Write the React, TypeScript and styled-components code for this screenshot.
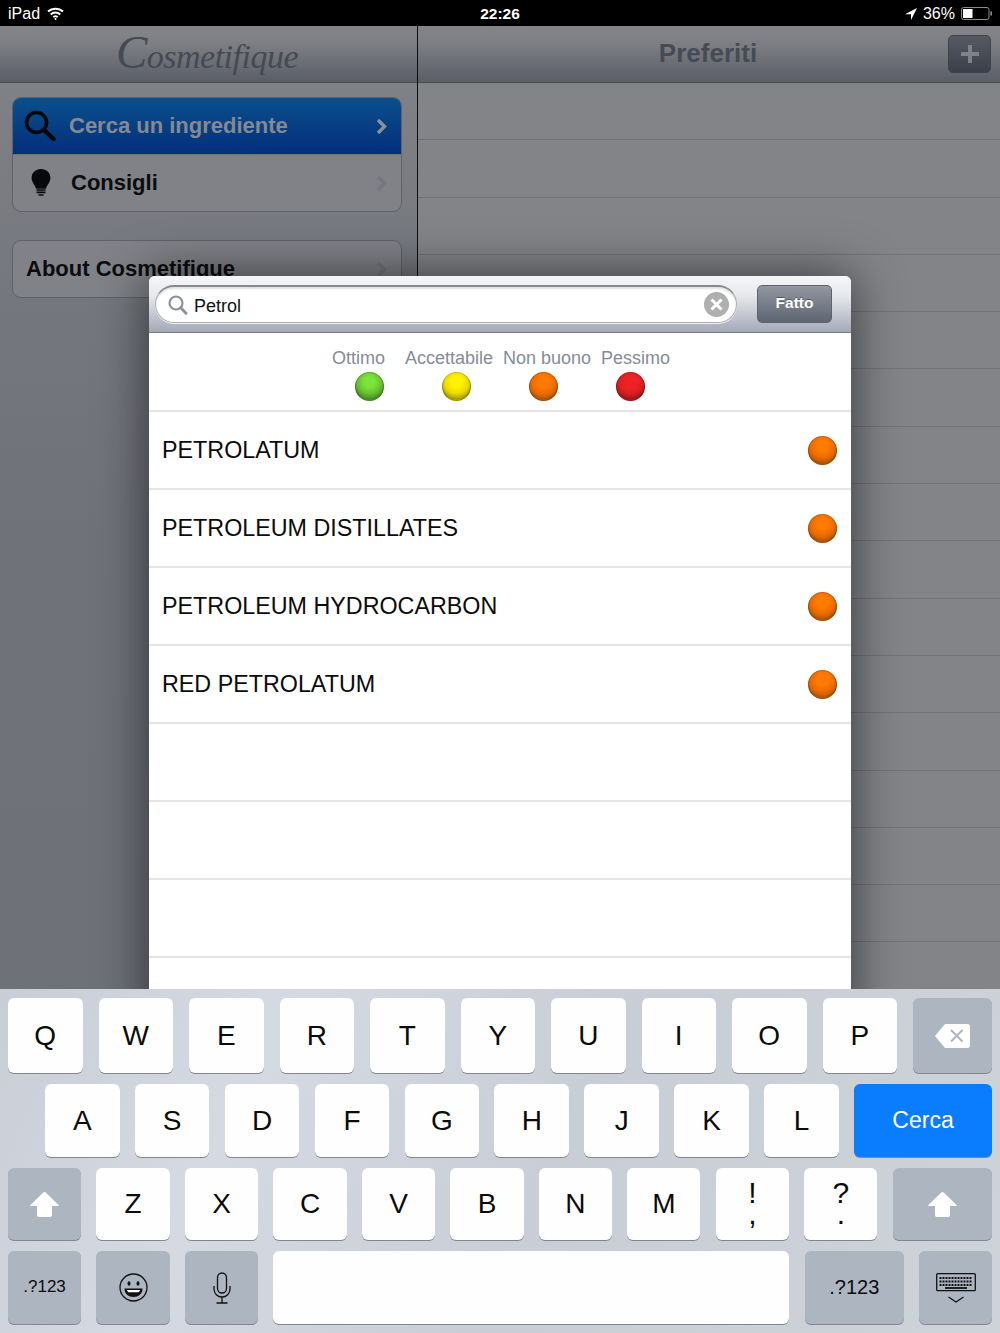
import React from "react";
import styled, { createGlobalStyle } from "styled-components";

const Global = createGlobalStyle`
  html, body { margin: 0; padding: 0; background: #000; }
  * { box-sizing: border-box; }
  body { font-family: "Liberation Sans", Arial, sans-serif; }
`;

const Page = styled.div`
  width: 1000px;
  height: 1333px;
  display: flex;
  flex-direction: column;
  overflow: hidden;
`;

const StatusBar = styled.div`
  height: 26px;
  flex: none;
  background: #000;
  color: #fff;
  display: grid;
  grid-template-columns: 1fr auto 1fr;
  align-items: center;
  padding: 1px 8px 0;
  font-size: 16px;
`;
const StatusSide = styled.div<{ $end?: boolean }>`
  display: flex;
  align-items: center;
  gap: ${(p) => (p.$end ? 6 : 7)}px;
  justify-content: ${(p) => (p.$end ? "flex-end" : "flex-start")};
`;
const Clock = styled.div`
  font-size: 15.5px;
  font-weight: 700;
`;

const Main = styled.div`
  position: relative;
  flex: 1;
  min-height: 0;
  display: flex;
  overflow: hidden;
`;

const Master = styled.section`
  width: 417px;
  flex: none;
  background: linear-gradient(180deg, #808186 57px, #74777d 270px, #6f7279 500px, #6e7178 100%);
`;
const Detail = styled.section`
  flex: 1;
  border-left: 1px solid #0c0d10;
  background: #838488;
`;

const NavBar = styled.header`
  height: 57px;
  position: relative;
  display: flex;
  align-items: center;
  justify-content: center;
  background: linear-gradient(180deg, #85868a 0%, #7b7d82 35%, #5c5f68 97%);
  border-bottom: 1px solid #484b52;
`;
const Logo = styled.div`
  font-family: "Liberation Serif", serif;
  font-style: italic;
  font-size: 34px;
  letter-spacing: -0.5px;
  color: #454a52;
  margin-left: -3px;
  margin-top: -5px;
  &::first-letter {
    font-size: 47px;
  }
`;
const NavTitle = styled.h1`
  margin: -1px 0 0 -2px;
  font-size: 26px;
  font-weight: 700;
  color: #464b53;
`;
const PlusButton = styled.div`
  position: absolute;
  right: 9px;
  top: 9px;
  width: 43px;
  height: 38px;
  border-radius: 5px;
  display: flex;
  align-items: center;
  justify-content: center;
  border: 1px solid #3f424a;
  background: linear-gradient(180deg, #555962, #3c404a);
`;

const MenuList = styled.div`
  padding: 14px 15px 0 12px;
  display: flex;
  flex-direction: column;
  gap: 28px;
`;
const Group = styled.div`
  border: 1px solid #5f6268;
  border-radius: 9px;
  overflow: hidden;
  background: #808287;
`;
const MenuRow = styled.div<{ $active?: boolean }>`
  height: ${(p) => (p.$active ? 57 : 56)}px;
  display: flex;
  align-items: center;
  padding: 0 14px 0 11px;
  gap: 13px;
  font-size: 22px;
  font-weight: 700;
  color: ${(p) => (p.$active ? "#858990" : "#0b0c0e")};
  background: ${(p) => (p.$active ? "linear-gradient(180deg, #0a4f8c, #032f7b)" : "transparent")};
  border-bottom: ${(p) => (p.$active ? "1px solid #6e7177" : "none")};
`;
const MenuIcon = styled.span<{ $inset?: number }>`
  display: flex;
  margin-left: ${(p) => p.$inset ?? 0}px;
`;
const MenuLabel = styled.span<{ $inset?: number }>`
  flex: 1;
  padding-left: ${(p) => p.$inset ?? 0}px;
`;

const TableRow = styled.div`
  height: 57.3px;
  border-bottom: 1px solid #707276;
`;

const Modal = styled.div`
  position: absolute;
  left: 149px;
  top: 250px;
  width: 702px;
  height: 760px;
  background: #fff;
  border-radius: 6px 6px 0 0;
  box-shadow: 0 0 50px rgba(0, 0, 0, 0.6);
  overflow: hidden;
`;
const ModalHeader = styled.div`
  height: 57px;
  display: flex;
  align-items: flex-start;
  gap: 20px;
  padding: 9px 19px 0 6px;
  background: linear-gradient(180deg, #f5f6f8 0%, #e6e8ec 35%, #a4a9b7 100%);
  border-bottom: 1px solid #767a85;
`;
const SearchField = styled.div`
  flex: 1;
  height: 38px;
  border-radius: 19px;
  background: #fff;
  border: 1px solid #a9acb3;
  border-top: 2px solid #85888f;
  box-shadow: 0 1px 0 #eef0f3, inset 0 2px 2px rgba(0, 0, 0, 0.12);
  display: flex;
  align-items: center;
  padding: 0 7px 0 12px;
  gap: 6px;
  font-size: 18px;
  color: #111;
`;
const SearchText = styled.span`
  flex: 1;
  padding-top: 4px;
`;
const DoneButton = styled.div`
  width: 75px;
  height: 38px;
  border-radius: 5px;
  border: 1px solid #5f636d;
  background: linear-gradient(180deg, #9297a0, #5e6572);
  color: #fff;
  font-size: 15.5px;
  font-weight: 700;
  display: flex;
  align-items: center;
  justify-content: center;
  padding-bottom: 3px;
  text-shadow: 0 -1px 0 rgba(0, 0, 0, 0.35);
`;

const Legend = styled.div`
  height: 79px;
  border-bottom: 2px solid #e4e4e6;
  padding-top: 15px;
`;
const LegendLabels = styled.div`
  display: flex;
  justify-content: center;
  padding-left: 2px;
  font-size: 18px;
  line-height: 21px;
  color: #868c98;
`;
const LegendLabel = styled.span<{ $gap: number }>`
  margin-left: ${(p) => p.$gap}px;
`;
const LegendDots = styled.div`
  display: flex;
  justify-content: center;
  gap: 58px;
  margin-top: 3px;
`;

const Dot = styled.span<{ $c: [string, string, string] }>`
  width: 29px;
  height: 29px;
  flex: none;
  border-radius: 50%;
  background: radial-gradient(
    circle at 50% 34%,
    ${(p) => p.$c[0]} 0%,
    ${(p) => p.$c[0]} 22%,
    ${(p) => p.$c[1]} 48%,
    ${(p) => p.$c[2]} 70%,
    ${(p) => p.$c[1]} 80%,
    ${(p) => p.$c[2]} 100%
  );
  box-shadow: inset 0 0 0 1px rgba(0, 0, 0, 0.16), inset 0 -2px 2px rgba(0, 0, 0, 0.14);
`;

const ResultRow = styled.div`
  height: 78px;
  border-bottom: 2px solid #e4e4e6;
  display: flex;
  align-items: center;
  justify-content: space-between;
  padding: 0 14px 0 13px;
  font-size: 23.3px;
  color: #0c0c0c;
`;

const Keyboard = styled.div`
  height: 344px;
  flex: none;
  padding: 9px 8px;
  display: flex;
  flex-direction: column;
  gap: 11px;
  background: linear-gradient(115deg, #c9ced6 0%, #d5d9e1 25%, #c9ced6 55%, #ced2d9 100%);
`;
const KeyRow = styled.div<{ $gap: number; $left?: number; $h: number }>`
  display: flex;
  height: ${(p) => p.$h}px;
  gap: ${(p) => p.$gap}px;
  padding-left: ${(p) => p.$left ?? 0}px;
`;
const Key = styled.div<{ $w: number; $tone?: "dark" | "blue"; $size?: number }>`
  width: ${(p) => p.$w}px;
  flex: none;
  border-radius: 6px;
  display: flex;
  flex-direction: column;
  align-items: center;
  justify-content: center;
  font-size: ${(p) => p.$size ?? 28}px;
  line-height: 1;
  color: ${(p) => (p.$tone === "blue" ? "#fff" : "#0b0b0b")};
  background: ${(p) => (p.$tone === "blue" ? "#0a7dfe" : p.$tone === "dark" ? "#adb5c1" : "#fefefe")};
  box-shadow: 0 1px 0 #83868c;
`;
const LabelKey = styled(Key)`
  padding-bottom: 2px;
`;
const StackGlyph = styled.span`
  display: block;
  text-align: center;
  line-height: 21px;
  font-size: 30px;
  padding-bottom: 3px;
`;

const ORANGE: [string, string, string] = ["#ff7a00", "#ee6c00", "#b95a04"];
const GREEN: [string, string, string] = ["#7de23c", "#68c232", "#4b9428"];
const YELLOW: [string, string, string] = ["#fff200", "#ecdc00", "#b0a400"];
const RED: [string, string, string] = ["#ee2224", "#dc1f22", "#a81a1c"];

const Chevron = ({ color }: { color: string }) => (
  <svg width="11" height="17" viewBox="0 0 11 17">
    <path d="M2 2l6.5 6.5L2 15" fill="none" stroke={color} strokeWidth="3.4" />
  </svg>
);

const Wifi = () => (
  <svg width="17" height="13" viewBox="0 0 17 13" fill="none" stroke="#fff" strokeWidth="2">
    <path d="M1 4.6C5.2.8 11.8.8 16 4.6" />
    <path d="M3.7 7.4c2.8-2.4 6.8-2.4 9.6 0" />
    <path d="M6.3 10c1.3-1 3.1-1 4.4 0" />
    <circle cx="8.5" cy="12" r="1" fill="#fff" stroke="none" />
  </svg>
);

const LocationArrow = () => (
  <svg width="12" height="12" viewBox="0 0 12 12">
    <path d="M12 0L0 6.2h6V12z" fill="#fff" />
  </svg>
);

const Battery = () => (
  <svg width="31" height="13" viewBox="0 0 31 13">
    <rect x="0.5" y="0.5" width="27.5" height="12" rx="2" fill="none" stroke="#8d8d8d" />
    <rect x="2" y="2" width="9.5" height="9" fill="#fff" />
    <rect x="29.4" y="4.5" width="1.6" height="4" fill="#8d8d8d" />
  </svg>
);

const Plus = () => (
  <svg width="18" height="18" viewBox="0 0 18 18">
    <path d="M7 0h4v7h7v4h-7v7H7v-7H0V7h7z" fill="#7f8289" />
  </svg>
);

const SearchBig = () => (
  <svg width="32" height="32" viewBox="0 0 32 32" fill="none" stroke="#05060a">
    <circle cx="12.5" cy="12.5" r="10" strokeWidth="3.6" />
    <path d="M20 20l9.5 9" strokeWidth="4.4" strokeLinecap="round" />
  </svg>
);

const Bulb = () => (
  <svg width="20" height="28" viewBox="0 0 20 28">
    <path d="M10 0c5.4 0 9.4 3.8 9.4 8.8 0 4.8-3.4 7-4.4 11H5C4 15.8.6 13.6.6 8.8.6 3.8 4.6 0 10 0z" fill="#07080b" />
    <path d="M5.5 21h9M5.5 23.4h9M7.5 26h5" stroke="#07080b" strokeWidth="1.6" />
  </svg>
);

const SearchSmall = () => (
  <svg width="20" height="20" viewBox="0 0 20 20" fill="none" stroke="#8d929a">
    <circle cx="8" cy="8" r="6.5" strokeWidth="2.2" />
    <path d="M12.8 12.8l5.2 5.4" strokeWidth="3" strokeLinecap="round" />
  </svg>
);

const ClearIcon = () => (
  <svg width="25" height="25" viewBox="0 0 25 25">
    <circle cx="12.5" cy="12.5" r="12.5" fill="#afafaf" />
    <path d="M7.5 7.5l10 10M17.5 7.5l-10 10" stroke="#fff" strokeWidth="3" />
  </svg>
);

const Shift = () => (
  <svg width="29" height="25" viewBox="0 0 29 25">
    <path
      d="M13.3.6a1.7 1.7 0 0 1 2.4 0L28.6 13a.6.6 0 0 1-.4 1H22v9a2 2 0 0 1-2 2H9a2 2 0 0 1-2-2v-9H.8a.6.6 0 0 1-.4-1z"
      fill="#fff"
    />
  </svg>
);

const Backspace = () => (
  <svg width="35" height="24" viewBox="0 0 35 24">
    <path d="M10 0h22a3 3 0 0 1 3 3v18a3 3 0 0 1-3 3H10L0 12z" fill="#fff" />
    <path d="M16 6l11.5 11.5M27.5 6L16 17.5" stroke="#adb5c1" strokeWidth="2" />
  </svg>
);

const Emoji = () => (
  <svg width="29" height="29" viewBox="0 0 29 29" fill="none" stroke="#111">
    <circle cx="14.5" cy="14.5" r="13.5" strokeWidth="1.3" />
    <ellipse cx="10" cy="10.5" rx="1.5" ry="2.3" fill="#111" stroke="none" />
    <ellipse cx="19" cy="10.5" rx="1.5" ry="2.3" fill="#111" stroke="none" />
    <path d="M5.5 15.5h18c0 5.5-4 8.5-9 8.5s-9-3-9-8.5z" fill="#111" stroke="none" />
    <path d="M8 17h13c-.5 1.5-1 2-1.5 2.2h-10C9 19 8.5 18.5 8 17z" fill="#fff" stroke="none" />
  </svg>
);

const Mic = () => (
  <svg width="18" height="32" viewBox="0 0 18 32" fill="none" stroke="#111" strokeWidth="1.3">
    <rect x="4.5" y="1" width="9" height="20" rx="4.5" />
    <path d="M1 14v3c0 4.5 3.5 8 8 8s8-3.5 8-8v-3M9 25v6M3.5 31h11" />
  </svg>
);

const KeyboardIcon = () => (
  <svg width="40" height="30" viewBox="0 0 40 30">
    <rect x="0.7" y="0.7" width="38.6" height="17" rx="1" fill="none" stroke="#111" strokeWidth="1.3" />
    <path d="M3.5 5h33M3.5 8.5h33M3.5 12h33" stroke="#111" strokeWidth="2" strokeDasharray="2 1" />
    <path d="M9 15h22" stroke="#111" strokeWidth="1.8" />
    <path d="M12.5 24l7.5 5 7.5-5" fill="none" stroke="#111" strokeWidth="1.2" />
  </svg>
);

const tableRows = Array.from({ length: 15 }, (_, i) => i);
const results = ["PETROLATUM", "PETROLEUM DISTILLATES", "PETROLEUM HYDROCARBON", "RED PETROLATUM"];
const emptyRows = [0, 1, 2];
const row1 = ["Q", "W", "E", "R", "T", "Y", "U", "I", "O", "P"];
const row2 = ["A", "S", "D", "F", "G", "H", "J", "K", "L"];
const row3 = ["Z", "X", "C", "V", "B", "N", "M"];

export default function App() {
  return (
    <Page>
      <Global />
      <StatusBar>
        <StatusSide>
          iPad
          <Wifi />
        </StatusSide>
        <Clock>22:26</Clock>
        <StatusSide $end>
          <LocationArrow />
          36%
          <Battery />
        </StatusSide>
      </StatusBar>

      <Main>
        <Master>
          <NavBar>
            <Logo>Cosmetifique</Logo>
          </NavBar>
          <MenuList>
            <Group>
              <MenuRow $active>
                <MenuIcon>
                  <SearchBig />
                </MenuIcon>
                <MenuLabel>Cerca un ingrediente</MenuLabel>
                <Chevron color="#8c9097" />
              </MenuRow>
              <MenuRow>
                <MenuIcon $inset={7}>
                  <Bulb />
                </MenuIcon>
                <MenuLabel $inset={7}>Consigli</MenuLabel>
                <Chevron color="#74777d" />
              </MenuRow>
            </Group>
            <Group>
              <MenuRow>
                <MenuLabel $inset={2}>About Cosmetifique</MenuLabel>
                <Chevron color="#74777d" />
              </MenuRow>
            </Group>
          </MenuList>
        </Master>

        <Detail>
          <NavBar>
            <NavTitle>Preferiti</NavTitle>
            <PlusButton>
              <Plus />
            </PlusButton>
          </NavBar>
          {tableRows.map((i) => (
            <TableRow key={i} />
          ))}
        </Detail>

        <Modal>
          <ModalHeader>
            <SearchField>
              <SearchSmall />
              <SearchText>Petrol</SearchText>
              <ClearIcon />
            </SearchField>
            <DoneButton>Fatto</DoneButton>
          </ModalHeader>
          <Legend>
            <LegendLabels>
              <LegendLabel $gap={0}>Ottimo</LegendLabel>
              <LegendLabel $gap={20}>Accettabile</LegendLabel>
              <LegendLabel $gap={10}>Non buono</LegendLabel>
              <LegendLabel $gap={10}>Pessimo</LegendLabel>
            </LegendLabels>
            <LegendDots>
              <Dot $c={GREEN} />
              <Dot $c={YELLOW} />
              <Dot $c={ORANGE} />
              <Dot $c={RED} />
            </LegendDots>
          </Legend>
          {results.map((r) => (
            <ResultRow key={r}>
              {r}
              <Dot $c={ORANGE} />
            </ResultRow>
          ))}
          {emptyRows.map((i) => (
            <ResultRow key={i} />
          ))}
        </Modal>
      </Main>

      <Keyboard>
        <KeyRow $gap={16} $h={75}>
          {row1.map((k) => (
            <Key key={k} $w={74.5}>
              {k}
            </Key>
          ))}
          <Key $w={79} $tone="dark">
            <Backspace />
          </Key>
        </KeyRow>
        <KeyRow $gap={15.3} $left={37} $h={73}>
          {row2.map((k) => (
            <Key key={k} $w={74.6}>
              {k}
            </Key>
          ))}
          <Key $w={138} $tone="blue" $size={23}>
            Cerca
          </Key>
        </KeyRow>
        <KeyRow $gap={15.4} $h={72}>
          <Key $w={73.1} $tone="dark">
            <Shift />
          </Key>
          {row3.map((k) => (
            <Key key={k} $w={73.1}>
              {k}
            </Key>
          ))}
          <Key $w={73.1}>
            <StackGlyph>
              !<br />,
            </StackGlyph>
          </Key>
          <Key $w={73.1}>
            <StackGlyph>
              ?<br />.
            </StackGlyph>
          </Key>
          <Key $w={99} $tone="dark">
            <Shift />
          </Key>
        </KeyRow>
        <KeyRow $gap={15.4} $h={73}>
          <LabelKey $w={73.1} $tone="dark" $size={17}>
            .?123
          </LabelKey>
          <Key $w={73.1} $tone="dark">
            <Emoji />
          </Key>
          <Key $w={73.1} $tone="dark">
            <Mic />
          </Key>
          <Key $w={516} />
          <LabelKey $w={99} $tone="dark" $size={20}>
            .?123
          </LabelKey>
          <Key $w={73.1} $tone="dark">
            <KeyboardIcon />
          </Key>
        </KeyRow>
      </Keyboard>
    </Page>
  );
}
